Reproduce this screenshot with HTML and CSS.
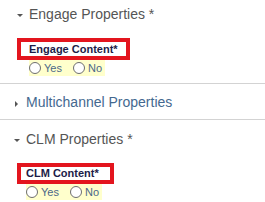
FILE: index.html
```html
<!DOCTYPE html>
<html lang="en">
<head>
  <meta charset="UTF-8" />
  <title>Properties</title>
  <link rel="stylesheet" href="styles.css">
</head>
<body>
  <div class="panel panel-engage">
    <div class="panel-head">
      <span class="caret-down"></span>
      <span class="panel-title">Engage Properties *</span>
    </div>
    <div class="field">
      <div class="field-label">Engage Content*</div>
      <div class="choices">
        <label class="choice"><span class="radio"></span>Yes</label>
        <label class="choice"><span class="radio"></span>No</label>
      </div>
    </div>
  </div>

  <div class="panel panel-multi">
    <div class="panel-head">
      <span class="caret-right"></span>
      <span class="panel-title collapsed">Multichannel Properties</span>
    </div>
  </div>

  <div class="panel panel-clm">
    <div class="panel-head">
      <span class="caret-down"></span>
      <span class="panel-title">CLM Properties *</span>
    </div>
    <div class="field">
      <div class="field-label">CLM Content*</div>
      <div class="choices">
        <label class="choice"><span class="radio"></span>Yes</label>
        <label class="choice"><span class="radio"></span>No</label>
      </div>
    </div>
  </div>
</body>
</html>
```

FILE: styles.css
```css
:root {
  --text: #555555;
  --link: #44688f;
  --label: #1c1c48;
  --choice: #4b6888;
  --border: #d3d3d3;
  --mark: #e3151e;
  --hint: #ffffcc;
}

body {
  margin: 0;
  font-family: "Liberation Sans", Arial, sans-serif;
  background: #ffffff;
  color: var(--text);
}

.panel {
  border-bottom: 1px solid var(--border);
}

.panel-head {
  display: flex;
  align-items: center;
  font-size: 14px;
  line-height: 16px;
}

.caret-down {
  width: 0;
  height: 0;
  border-left: 3px solid transparent;
  border-right: 3px solid transparent;
  border-top: 3px solid var(--text);
  margin-top: 3px;
  margin-right: 6px;
}

.caret-right {
  width: 0;
  height: 0;
  border-top: 3px solid transparent;
  border-bottom: 3px solid transparent;
  border-left: 3px solid var(--text);
  margin-top: 4px;
  margin-right: 8px;
}

.panel-title.collapsed {
  color: var(--link);
}

/* engage */
.panel-engage {
  padding: 6px 0 5px;
}

.panel-engage .panel-head {
  padding-left: 17px;
}

.panel-engage .field-label {
  width: 97px;
  height: 14px;
  line-height: 14px;
  margin-left: 17px;
  padding-left: 8px;
}

.panel-engage .choices {
  margin-left: 29px;
}

/* multichannel */
.panel-multi {
  padding: 10px 0 9px;
}

.panel-multi .panel-head {
  padding-left: 15px;
}

/* clm */
.panel-clm {
  padding-top: 11px;
  border-bottom: none;
}

.panel-clm .panel-head {
  padding-left: 14px;
}

.panel-clm .field-label {
  width: 84px;
  height: 13px;
  line-height: 13px;
  margin-left: 17px;
  padding-left: 5px;
}

.panel-clm .choices {
  margin-left: 26px;
}

.field {
  margin-top: 16px;
}

.field-label {
  border: 4px solid var(--mark);
  font-size: 11px;
  font-weight: bold;
  color: var(--label);
  white-space: nowrap;
}

.choices {
  display: inline-flex;
  align-items: center;
  gap: 11px;
  height: 16px;
  padding-right: 3px;
  background: var(--hint);
  font-size: 11px;
  color: var(--choice);
}

.choice {
  display: inline-flex;
  align-items: center;
  gap: 3px;
}

.radio {
  width: 10px;
  height: 10px;
  border: 1px solid #6e6e6e;
  border-radius: 50%;
  background: #ffffff;
}
```
